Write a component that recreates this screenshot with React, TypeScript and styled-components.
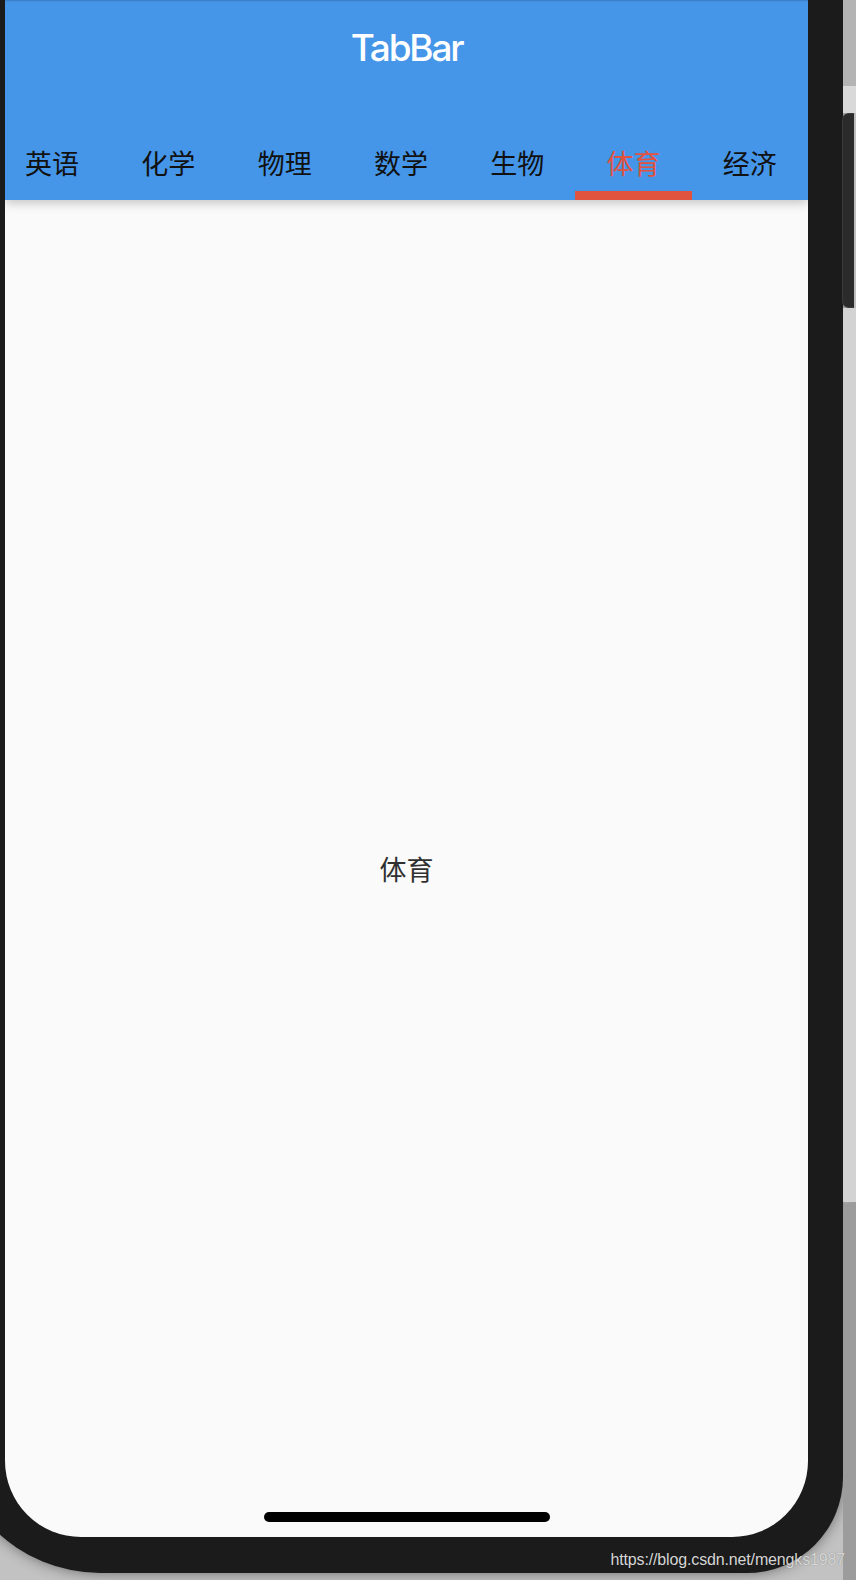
import styled, { createGlobalStyle } from "styled-components";

const GlobalStyle = createGlobalStyle`
  html, body {
    margin: 0;
    padding: 0;
    width: 856px;
    height: 1580px;
    overflow: hidden;
    background: #c2c2c2;
  }
  * { box-sizing: border-box; }
`;

const TABS = ["英语", "化学", "物理", "数学", "生物", "体育", "经济"];
const ACTIVE = 5;

const Page = styled.div`
  position: relative;
  width: 856px;
  height: 1580px;
  display: flex;
  align-items: flex-start;
  overflow: hidden;
`;

const Phone = styled.div`
  flex: 0 0 893px;
  margin-left: -50px;
  height: 1573px;
  padding: 0 35px 36px 55px;
  background: #1b1b1b;
  border-bottom-left-radius: 150px;
  border-bottom-right-radius: 96px;
  box-shadow: 0 0 14px rgba(0, 0, 0, 0.45);
`;

const Screen = styled.div`
  position: relative;
  width: 803px;
  height: 1537px;
  display: flex;
  flex-direction: column;
  background: #fafafa;
  border-bottom-left-radius: 76px;
  border-bottom-right-radius: 76px;
  overflow: hidden;
`;

const AppBar = styled.header`
  position: relative;
  z-index: 1;
  flex: 0 0 200px;
  display: flex;
  flex-direction: column;
  background: #4596e9;
  box-shadow: inset 0 2px 2px -1px rgba(0, 0, 0, 0.18), 0 3px 10px rgba(0, 0, 0, 0.22);
`;

const Title = styled.h1`
  margin: 0;
  height: 95px;
  line-height: 95px;
  text-align: center;
  color: #ffffff;
  font-family: Inter, "Noto Sans", sans-serif;
  font-size: 37px;
  font-weight: 500;
  letter-spacing: -2.2px;
`;

const TabRow = styled.nav`
  flex: 1;
  display: flex;
  justify-content: flex-end;
  overflow: hidden;
`;

const Tab = styled.div`
  flex: 0 0 116.3px;
  display: flex;
  flex-direction: column;
  align-items: center;
  padding-top: 48px;
`;

const TabLabel = styled.span<{ $active: boolean }>`
  height: 40px;
  line-height: 40px;
  font-family: "Noto Sans CJK SC", "Noto Sans", sans-serif;
  font-size: 27px;
  white-space: nowrap;
  color: ${(p) => (p.$active ? "#e1533f" : "#111111")};
`;

const Indicator = styled.div<{ $active: boolean }>`
  margin-top: auto;
  align-self: stretch;
  height: 9px;
  background: ${(p) => (p.$active ? "#e2533f" : "transparent")};
`;

const Body = styled.main`
  flex: 1;
  display: flex;
  align-items: center;
  justify-content: center;
`;

const BodyText = styled.span`
  font-family: "Noto Sans CJK SC", "Noto Sans", sans-serif;
  font-size: 27px;
  color: #303030;
`;

const HomeIndicator = styled.div`
  position: absolute;
  left: 259px;
  bottom: 15px;
  width: 286px;
  height: 10px;
  border-radius: 5px;
  background: #000000;
`;

const Rail = styled.div`
  flex: 0 0 13px;
  height: 1580px;
  display: flex;
  flex-direction: column;
`;

const RailPart = styled.div<{ $h?: number; $bg: string; $round?: string }>`
  flex: ${(p) => (p.$h ? `0 0 ${p.$h}px` : "1")};
  background: ${(p) => p.$bg};
  border-radius: ${(p) => p.$round || "0"};
`;

const SideButton = styled.div`
  flex: 0 0 195px;
  margin-right: 2px;
  margin-left: -1px;
  background: #2b2b2b;
  border: 1px solid #3a3a3a;
  border-right: none;
  border-radius: 7px 0 0 7px;
`;

const Watermark = styled.div`
  position: absolute;
  right: 11px;
  top: 1552px;
  line-height: 16px;
  font-family: "Liberation Sans", Arial, sans-serif;
  font-size: 16px;
  letter-spacing: -0.15px;
  color: #d6d6d6;
  text-shadow: 0 0 1px rgba(0, 0, 0, 0.35);
  white-space: nowrap;
`;

export default function App() {
  return (
    <>
      <GlobalStyle />
      <Page>
        <Phone>
          <Screen>
            <AppBar>
              <Title>TabBar</Title>
              <TabRow>
                {TABS.map((t, i) => (
                  <Tab key={t}>
                    <TabLabel $active={i === ACTIVE}>{t}</TabLabel>
                    <Indicator $active={i === ACTIVE} />
                  </Tab>
                ))}
              </TabRow>
            </AppBar>
            <Body>
              <BodyText>{TABS[ACTIVE]}</BodyText>
            </Body>
            <HomeIndicator />
          </Screen>
        </Phone>
        <Rail>
          <RailPart $h={86} $bg="#b4b4b4" />
          <RailPart $h={27} $bg="#d9d9d9" />
          <SideButton />
          <RailPart $h={894} $bg="#d3d3d3" />
          <RailPart $bg="#9c9c9c" $round="8px 0 0 0" />
        </Rail>
        <Watermark>https://blog.csdn.net/mengks1987</Watermark>
      </Page>
    </>
  );
}
